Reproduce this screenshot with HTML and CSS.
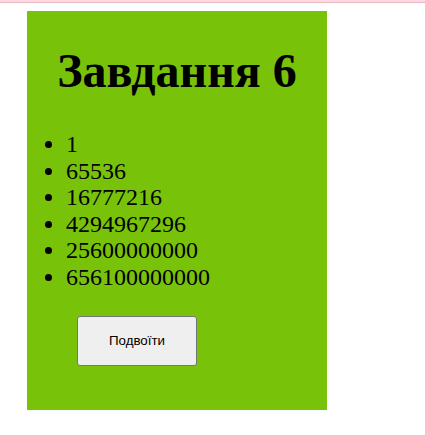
FILE: index.html
```html
<!DOCTYPE html>
<html lang="uk">
<head>
<meta charset="utf-8">
<title>Завдання 6</title>
<link rel="stylesheet" href="styles.css">
</head>
<body>
<div class="topbar"></div>
<div class="card">
  <h1 class="title">Завдання 6</h1>
  <ul class="list">
    <li>1</li>
    <li>65536</li>
    <li>16777216</li>
    <li>4294967296</li>
    <li>25600000000</li>
    <li>656100000000</li>
  </ul>
  <button class="btn" type="button">Подвоїти</button>
</div>
</body>
</html>
```
FILE: styles.css
```css
html, body {
  margin: 0;
  padding: 0;
  background: #ffffff;
}
body {
  font-family: "Liberation Serif", "Times New Roman", serif;
  color: #000;
}
.topbar {
  height: 2px;
  background: #ffd9e1;
  border-bottom: 1px solid #e7b9c3;
}
.card {
  box-sizing: border-box;
  width: 300px;
  height: 399px;
  margin: 8px 0 0 27px;
  background: #78c20a;
  padding: 1px 0 0 0;
}
.title {
  font-size: 48px;
  font-weight: bold;
  text-align: center;
  margin: 32px 0 0 0;
  line-height: 53px;
}
.list {
  margin: 34px 0 0 0;
  padding-left: 39px;
  font-size: 24px;
  line-height: 26.6px;
}
.btn {
  display: block;
  margin: 25px 0 0 50px;
  width: 120px;
  height: 50px;
  background: #efefef;
  border: 1px solid #767676;
  border-radius: 3px;
  font-family: "Liberation Sans", Arial, sans-serif;
  font-size: 13.33px;
  color: #000;
}
```
